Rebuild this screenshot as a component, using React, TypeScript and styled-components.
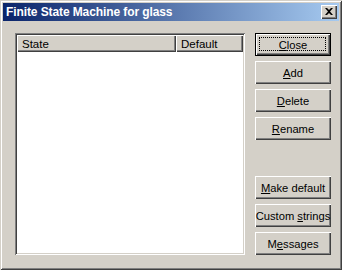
import React from "react";
import styled, { createGlobalStyle } from "styled-components";

const Global = createGlobalStyle`
  html, body { margin: 0; padding: 0; background: #d4d0c8; }
  * { box-sizing: border-box; }
`;

const Window = styled.div`
  width: 342px;
  height: 270px;
  background: #d4d0c8;
  padding: 3px;
  display: flex;
  flex-direction: column;
  box-shadow: inset 1px 1px 0 #d4d0c8, inset -1px -1px 0 #404040,
    inset 2px 2px 0 #ffffff, inset -2px -2px 0 #808080;
  font-family: Tahoma, "Liberation Sans", Arial, sans-serif;
  font-size: 11px;
  color: #000;
`;

const TitleBar = styled.div`
  height: 18px;
  display: flex;
  align-items: center;
  justify-content: space-between;
  padding: 0 2px 0 2px;
  background: linear-gradient(to right, #0a246a, #a6caf0);
`;

const Title = styled.span`
  color: #fff;
  font-weight: bold;
  font-size: 12px;
  letter-spacing: -0.1px;
  padding-left: 1px;
`;

const CloseBox = styled.div`
  width: 16px;
  height: 14px;
  background: #d4d0c8;
  box-shadow: inset 1px 1px 0 #ffffff, inset -1px -1px 0 #404040,
    inset -2px -2px 0 #808080;
  display: flex;
  align-items: center;
  justify-content: center;
  padding-bottom: 1px;
`;

const Body = styled.div`
  flex: 1;
  display: flex;
  gap: 10px;
  padding: 12px 8px 12px 12px;
`;

const ListBox = styled.div`
  width: 230px;
  background: #fff;
  padding: 2px;
  display: flex;
  flex-direction: column;
  box-shadow: inset 1px 1px 0 #808080, inset -1px -1px 0 #ffffff,
    inset 2px 2px 0 #404040, inset -2px -2px 0 #d4d0c8;
`;

const Header = styled.div`
  display: flex;
  height: 17px;
`;

const HeaderCell = styled.div<{ $w: number }>`
  width: ${(p) => p.$w}px;
  flex: ${(p) => (p.$w ? "none" : "1")};
  background: #d4d0c8;
  display: flex;
  align-items: center;
  padding-left: 5px;
  font-size: 11.5px;
  box-shadow: inset 1px 1px 0 #ffffff, inset -1px -1px 0 #404040,
    inset -2px -2px 0 #808080;
`;

const Buttons = styled.div`
  width: 76px;
  display: flex;
  flex-direction: column;
  justify-content: space-between;
`;

const Group = styled.div`
  display: flex;
  flex-direction: column;
  gap: 5px;
`;

const Button = styled.div<{ $default?: boolean }>`
  height: 23px;
  background: #d4d0c8;
  display: flex;
  align-items: center;
  justify-content: center;
  white-space: nowrap;
  position: relative;
  font-size: 11.2px;
  box-shadow: ${(p) =>
    p.$default
      ? "inset 0 0 0 1px #000, inset 2px 2px 0 #ffffff, inset -2px -2px 0 #404040, inset -3px -3px 0 #808080"
      : "inset 1px 1px 0 #ffffff, inset -1px -1px 0 #404040, inset -2px -2px 0 #808080"};
`;

const Focus = styled.span`
  position: absolute;
  left: 4px;
  top: 4px;
  right: 5px;
  bottom: 5px;
  border: 1px dotted #000;
`;

const U = styled.span`
  text-decoration: underline;
`;

export default function App() {
  return (
    <>
      <Global />
      <Window>
        <TitleBar>
          <Title>Finite State Machine for glass</Title>
          <CloseBox>
            <svg width="8" height="7" viewBox="0 0 8 7">
              <path d="M0 0h2l2 2 2-2h2L5 3.5 8 7H6L4 5 2 7H0l3-3.5z" fill="#000" />
            </svg>
          </CloseBox>
        </TitleBar>
        <Body>
          <ListBox>
            <Header>
              <HeaderCell $w={159}>State</HeaderCell>
              <HeaderCell $w={0}>Default</HeaderCell>
            </Header>
          </ListBox>
          <Buttons>
            <Group>
              <Button $default>
                <Focus />
                <span><U>C</U>lose</span>
              </Button>
              <Button><span><U>A</U>dd</span></Button>
              <Button><span><U>D</U>elete</span></Button>
              <Button><span><U>R</U>ename</span></Button>
            </Group>
            <Group>
              <Button><span><U>M</U>ake default</span></Button>
              <Button><span>Custom <U>s</U>trings</span></Button>
              <Button><span>M<U>e</U>ssages</span></Button>
            </Group>
          </Buttons>
        </Body>
      </Window>
    </>
  );
}
